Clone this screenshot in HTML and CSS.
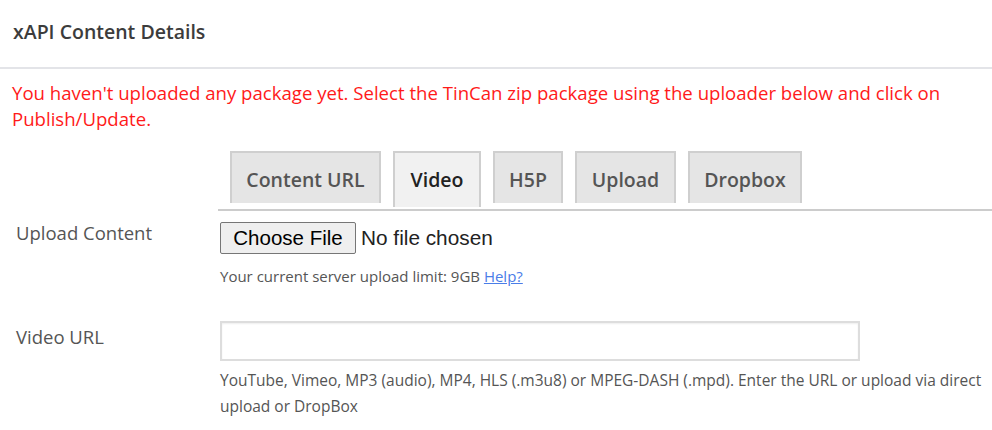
FILE: index.html
```html
<!DOCTYPE html>
<html>
<head>
<meta charset="utf-8">
<link rel="stylesheet" href="styles.css">
</head>
<body>
<div class="panel">
  <div class="panel-header"><h2 class="panel-title">xAPI Content Details</h2></div>
  <div class="panel-body">
    <p class="notice">You haven't uploaded any package yet. Select the TinCan zip package using the uploader below and click on Publish/Update.</p>
    <div class="tabs">
      <div class="tab tab-content">Content URL</div>
      <div class="tab tab-video tab-active">Video</div>
      <div class="tab tab-h5p">H5P</div>
      <div class="tab tab-upload">Upload</div>
      <div class="tab tab-dropbox">Dropbox</div>
    </div>
    <div class="row row-upload">
      <div class="label">Upload Content</div>
      <div class="field">
        <div class="file-input"><span class="file-btn">Choose File</span><span class="file-none">No file chosen</span></div>
        <div class="help">Your current server upload limit: 9GB <a class="help-link" href="#">Help?</a></div>
      </div>
    </div>
    <div class="row row-video">
      <div class="label">Video URL</div>
      <div class="field">
        <div class="text-input"></div>
        <div class="help help-long">YouTube, Vimeo, MP3 (audio), MP4, HLS (.m3u8) or MPEG-DASH (.mpd). Enter the URL or upload via direct upload or DropBox</div>
      </div>
    </div>
  </div>
</div>
</body>
</html>
```
FILE: styles.css
```css
* { box-sizing: border-box; }
body {
  margin: 0;
  background: #fff;
  font-family: "Open Sans", "Noto Sans", sans-serif;
  color: #555;
}
.panel-header {
  height: 69px;
  border-bottom: 2px solid #e3e4e8;
  padding: 0 13px 5px;
  display: flex;
  align-items: center;
}
.panel-title {
  margin: 0;
  font-size: 19.5px;
  font-weight: 600;
  color: #3c3c3c;
}
.notice {
  margin: 11px 0 0;
  padding: 0 12px;
  color: #ff1a1a;
  font-size: 18.6px;
  line-height: 26px;
}
.tabs {
  display: flex;
  gap: 12px;
  margin: 19px 0 0 218px;
  padding-left: 12px;
  border-bottom: 2px solid #cccccc;
  height: 60px;
  align-items: flex-start;
}
.tab {
  height: 52px;
  display: flex;
  align-items: center;
  justify-content: center;
  padding-top: 3px;
  background: #e5e5e5;
  border: 2px solid #cfcfcf;
  border-bottom: none;
  font-size: 19.5px;
  font-weight: 600;
  color: #555;
}
.tab-content { width: 151px; }
.tab-video { width: 88px; }
.tab-h5p { width: 70px; }
.tab-upload { width: 101px; }
.tab-dropbox { width: 114px; }
.tab-active {
  background: #f1f1f1;
  color: #222;
  height: 56px;
  padding-top: 0;
  padding-bottom: 1px;
}
.row {
  display: grid;
  grid-template-columns: 220px 1fr;
}
.label {
  padding-left: 16px;
  font-size: 18.5px;
  line-height: 22px;
  color: #555;
}
.row-upload { margin-top: 11px; }
.file-input {
  display: flex;
  align-items: center;
  font-family: "Liberation Sans", Arial, sans-serif;
  color: #222;
}
.file-btn {
  height: 32px;
  width: 136px;
  display: flex;
  align-items: center;
  justify-content: center;
  border: 1px solid #767676;
  border-radius: 2px;
  background: #efefef;
  font-size: 20.5px;
  color: #000;
}
.file-none {
  margin-left: 5px;
  font-size: 20.8px;
  color: #222;
}
.help {
  font-size: 15px;
  color: #555;
  line-height: 26px;
  margin-top: 9px;
}
.help-link { color: #4a7de8; }
.row-video { margin-top: 32px; }
.row-video .label { padding-top: 5px; }
.text-input {
  width: 640px;
  height: 40px;
  border: 2px solid #dddddd;
  box-shadow: inset 0 1px 2px rgba(0,0,0,0.07);
  background: #fff;
}
.help-long {
  margin-top: 6px;
  font-size: 15.5px;
  padding-right: 6px;
}
```
